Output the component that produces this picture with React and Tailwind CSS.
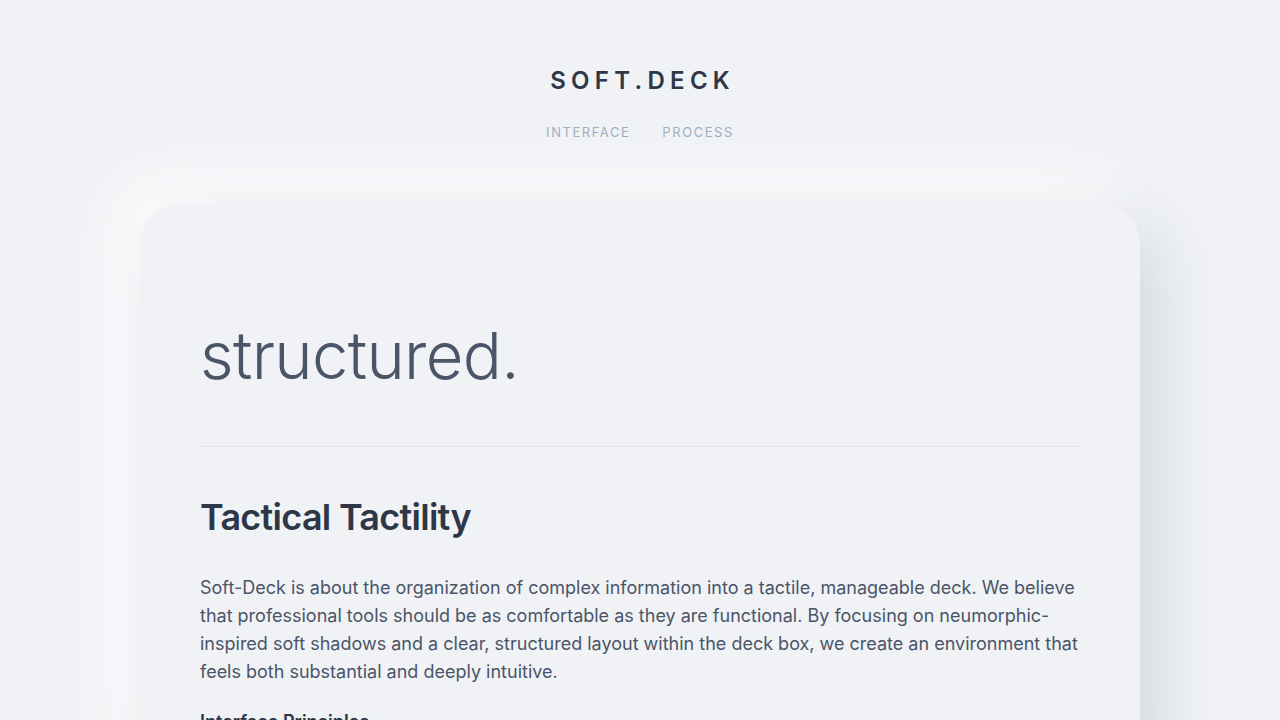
import React from "react";

export default function App() {
  return (
    <div className="min-h-screen bg-[#f0f2f5] font-['Inter','Noto_Sans',sans-serif] overflow-hidden">
      <header className="flex flex-col items-center pt-[65px]">
        <h1 className="text-[24px] leading-[32px] font-semibold tracking-[0.22em] pl-[0.22em] text-[#2d3748]">
          SOFT.DECK
        </h1>
        <nav className="mt-[27px] flex gap-[32px] text-[13px] leading-[16px] tracking-[0.12em] text-[#a0aec0]">
          <a>INTERFACE</a>
          <a>PROCESS</a>
        </nav>
      </header>
      <main className="mx-auto mt-[64px] w-[1000px] rounded-[40px] bg-[#f0f2f5] px-[60px] pt-[112px] pb-[60px] shadow-[20px_20px_60px_#d5d9df,-20px_-20px_60px_#ffffff]">
        <h2 className="text-[65px] leading-[80px] font-light tracking-[-0.01em] text-[#4a5568]">
          structured.
        </h2>
        <div className="mt-[50px] h-px bg-[#e2e5ea]" />
        <h3 className="mt-[48px] text-[36px] leading-[44px] font-semibold tracking-[-0.02em] text-[#2d3748]">
          Tactical Tactility
        </h3>
        <p className="mt-[35px] text-[18px] leading-[28px] text-[#4a5568]">
          Soft-Deck is about the organization of complex information into a tactile, manageable deck. We believe
          that professional tools should be as comfortable as they are functional. By focusing on neumorphic-inspired
          soft shadows and a clear, structured layout within the deck box, we create an environment that feels both
          substantial and deeply intuitive.
        </p>
        <h4 className="mt-[22px] text-[18px] leading-[28px] font-semibold text-[#2d3748]">
          Interface Principles
        </h4>
      </main>
    </div>
  );
}
